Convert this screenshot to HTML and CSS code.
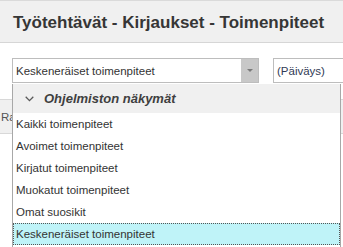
FILE: index.html
```html
<!DOCTYPE html>
<html lang="fi">
<head>
<meta charset="utf-8">
<link rel="stylesheet" href="styles.css">
</head>
<body>
<div class="page">
  <div class="titlebar"><h1 class="title">Työtehtävät - Kirjaukset - Toimenpiteet</h1></div>
  <div class="toolbar">
    <div class="combo combo-main">
      <span class="combo-text">Keskeneräiset toimenpiteet</span>
      <span class="combo-btn"><span class="tri"></span></span>
    </div>
    <div class="combo combo-date"><span class="combo-text">(Päiväys)</span></div>
  </div>
  <div class="strip"><span class="strip-text">Ra</span></div>

  <div class="dropdown">
    <div class="group">
      <svg class="chev" width="9" height="6" viewBox="0 0 9 6"><path d="M0.7 0.8 L4.5 4.6 L8.3 0.8" fill="none" stroke="#5a5a5a" stroke-width="1.3"/></svg>
      <span class="group-text">Ohjelmiston näkymät</span>
    </div>
    <div class="item">Kaikki toimenpiteet</div>
    <div class="item">Avoimet toimenpiteet</div>
    <div class="item">Kirjatut toimenpiteet</div>
    <div class="item">Muokatut toimenpiteet</div>
    <div class="item">Omat suosikit</div>
    <div class="item item-selected">Keskeneräiset toimenpiteet</div>
  </div>
</div>
</body>
</html>
```

FILE: styles.css
```css
html, body {
  margin: 0;
  padding: 0;
  background: #ffffff;
  overflow: hidden;
}
.page {
  position: relative;
  width: 343px;
  height: 247px;
  overflow: hidden;
  font-family: "Liberation Sans", Arial, sans-serif;
  color: #333333;
}
.titlebar {
  height: 43px;
  box-sizing: border-box;
  border-top: 1px solid #dadada;
  border-bottom: 1px solid #d6d6d6;
  background: #f0f0f0;
  padding: 12px 0 0 13px;
}
.title {
  margin: 0;
  font-size: 17px;
  line-height: 20px;
  font-weight: bold;
  color: #363636;
  white-space: nowrap;
}
.toolbar {
  display: flex;
  gap: 14px;
  padding: 15px 0 0 12px;
}
.combo {
  display: flex;
  align-items: stretch;
  height: 25px;
  box-sizing: border-box;
  border: 1px solid #bdbdbd;
  background: #ffffff;
  font-size: 11.5px;
}
.combo-main {
  width: 259px;
}
.combo-date {
  flex: 1;
  min-width: 70px;
  border-right: none;
}
.combo-text {
  flex: 1;
  display: flex;
  align-items: center;
  padding-left: 3px;
  color: #333333;
  white-space: nowrap;
}
.combo-date .combo-text {
  color: #2f3a55;
}
.combo-btn {
  width: 17px;
  background: #c8c8c8;
  display: flex;
  align-items: center;
  justify-content: center;
}
.tri {
  width: 0;
  height: 0;
  border-left: 3px solid transparent;
  border-right: 3px solid transparent;
  border-top: 3px solid #7a7a7a;
}
.strip {
  margin-top: 16px;
  height: 35px;
  box-sizing: border-box;
  border-top: 1px solid #d8d8d8;
  border-bottom: 1px solid #d8d8d8;
  background: #f0f0f0;
  display: flex;
  align-items: center;
  padding-left: 1px;
  font-size: 11.5px;
  color: #555555;
}
.strip-text {
  display: block;
  width: 11px;
  overflow: hidden;
  white-space: nowrap;
}
.dropdown {
  position: absolute;
  left: 12px;
  top: 84px;
  width: 329px;
  bottom: 0;
  box-sizing: border-box;
  border-left: 1px solid #a8a8a8;
  border-right: 1px solid #a8a8a8;
  background: #ffffff;
  font-size: 11.5px;
}
.group {
  height: 29px;
  box-sizing: border-box;
  background: #f0f0f0;
  display: flex;
  align-items: center;
  padding-left: 12px;
  gap: 10px;
}
.chev {
  display: block;
}
.group-text {
  font-size: 13px;
  font-weight: bold;
  font-style: italic;
  color: #3f3f3f;
  white-space: nowrap;
}
.item {
  height: 22px;
  line-height: 22px;
  padding-left: 3px;
  color: #333333;
  white-space: nowrap;
  box-sizing: border-box;
}
.item-selected {
  background: #bff3f8;
  border: 1px dotted #555555;
  line-height: 20px;
  padding-left: 2px;
}
```
